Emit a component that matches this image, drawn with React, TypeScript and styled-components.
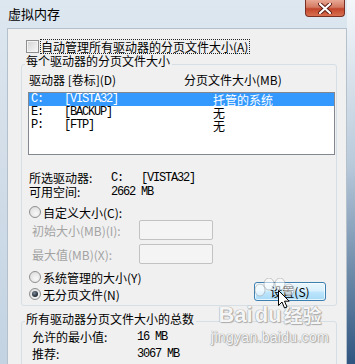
import React from "react";
import styled, { createGlobalStyle } from "styled-components";

const GlobalStyle = createGlobalStyle`
  html, body {
    margin: 0;
    padding: 0;
  }
  body {
    font-family: "Noto Sans CJK SC", "Microsoft YaHei", sans-serif;
    font-size: 12px;
    color: #000;
  }
`;

const Window = styled.div`
  position: relative;
  width: 355px;
  height: 364px;
  overflow: hidden;
  display: flex;
  flex-direction: column;
  background:
    linear-gradient(#f4f7fa 0%, #b9cadb 45%, #2f5580 100%) right top / 8px 100% no-repeat,
    linear-gradient(#dde7f0 0%, #d3dee9 40%, #c3d3e2 100%);
`;

const TitleBar = styled.div`
  height: 28px;
  flex-shrink: 0;
  display: flex;
  align-items: flex-start;
  justify-content: space-between;
`;

const Title = styled.span`
  margin: 7px 0 0 8px;
  font-size: 13px;
  line-height: 14px;
`;

const CloseButton = styled.div`
  width: 40px;
  height: 17px;
  margin-right: 10px;
  box-sizing: border-box;
  border: 1px solid #7a2f24;
  border-top: none;
  border-radius: 0 0 4px 4px;
  background: linear-gradient(#e8a895 0%, #d47a62 45%, #c2462c 55%, #d9704f 100%);
  display: flex;
  align-items: center;
  justify-content: center;
`;

const Client = styled.div`
  flex: 1;
  margin: 0 8px 0 7px;
  border: 1px solid #b4c0cc;
  border-bottom: none;
  background: #f0f0f0;
  display: flex;
  flex-direction: column;
  overflow: hidden;
`;

const CheckRow = styled.div`
  display: flex;
  align-items: center;
  gap: 1px;
  height: 15px;
  margin: 10px 0 0 18px;
`;

const CheckBox = styled.span`
  width: 13px;
  height: 13px;
  box-sizing: border-box;
  border: 1px solid #8f8f8f;
  background: linear-gradient(135deg, #d2d2d2 0%, #e6e6e6 50%, #f8f8f8 100%);
  box-shadow: inset 0 0 0 1px #f4f4f4;
`;

const FocusText = styled.span`
  border: 1px dotted #222;
  padding: 0 1px 0 0;
  line-height: 13px;
`;

const Group = styled.div<{ $top: number; $open?: boolean }>`
  margin: ${(p) => p.$top}px 9px ${(p) => (p.$open ? "-20px" : "0")} 13px;
  border: 1px solid #d5dfe5;
  border-radius: 3px;
  display: flex;
  flex-direction: column;
  padding-bottom: 4px;
  ${(p) => (p.$open ? "flex: 1;" : "")}
`;

const GroupLabel = styled.span<{ $lift: number }>`
  align-self: flex-start;
  margin: ${(p) => -p.$lift}px 0 0 3px;
  padding: 0 2px 0 1px;
  background: #f0f0f0;
  line-height: 13px;
`;

const HeaderRow = styled.div`
  display: flex;
  margin: 6px 0 0 7px;
  line-height: 14px;
`;

const HeaderCell = styled.span<{ $w?: number }>`
  ${(p) => (p.$w ? `width: ${p.$w}px;` : "")}
`;

const ListBox = styled.div`
  margin: 5px 1px 0 6px;
  height: 63px;
  box-sizing: border-box;
  border: 1px solid #828790;
  background: #fff;
  display: flex;
  flex-direction: column;
`;

const ListRow = styled.div<{ $selected?: boolean; $h: number }>`
  height: ${(p) => p.$h}px;
  display: flex;
  align-items: center;
  background: ${(p) => (p.$selected ? "#3399ff" : "transparent")};
  color: ${(p) => (p.$selected ? "#fff" : "#000")};
`;

const Mono = styled.span<{ $w?: number; $pad?: number }>`
  font-family: "Liberation Mono", "DejaVu Sans Mono", monospace;
  font-size: 12px;
  line-height: 11px;
  letter-spacing: -1.2px;
  white-space: pre;
  ${(p) => (p.$w ? `width: ${p.$w}px;` : "")}
  padding-left: ${(p) => p.$pad ?? 0}px;
  box-sizing: border-box;
`;

const StatusCell = styled.span`
  line-height: 11px;
`;

const InfoRow = styled.div<{ $top: number; $left: number }>`
  display: flex;
  align-items: center;
  height: 14px;
  margin: ${(p) => p.$top}px 0 0 ${(p) => p.$left}px;
  line-height: 12px;
`;

const InfoKey = styled.span<{ $w: number }>`
  width: ${(p) => p.$w}px;
`;

const RadioRow = styled.div<{ $top?: number }>`
  display: flex;
  align-items: center;
  gap: 2px;
  height: 14px;
  margin: ${(p) => p.$top ?? 0}px 0 0 7px;
  line-height: 13px;
`;

const Radio = styled.span<{ $checked?: boolean }>`
  width: 12px;
  height: 12px;
  box-sizing: border-box;
  border-radius: 50%;
  border: 1px solid #8e8f8f;
  background: radial-gradient(circle at 60% 65%, #f8f8f8 0%, #d8d8d8 100%);
  display: flex;
  align-items: center;
  justify-content: center;
  &::after {
    content: "";
    display: ${(p) => (p.$checked ? "block" : "none")};
    width: 6px;
    height: 6px;
    border-radius: 50%;
    background: radial-gradient(circle at 40% 35%, #7d8a96 0%, #2a3440 60%, #111 100%);
  }
`;

const FieldRow = styled.div<{ $top: number }>`
  display: flex;
  align-items: center;
  height: 20px;
  margin: ${(p) => p.$top}px 0 0 10px;
`;

const FieldLabel = styled.span`
  width: 107px;
  color: #a3a3a3;
  line-height: 13px;
`;

const FieldInput = styled.span`
  width: 74px;
  height: 20px;
  box-sizing: border-box;
  border: 1px solid #c2c2c2;
  border-radius: 2px;
  background: #f4f4f4;
`;

const BottomRow = styled.div`
  display: flex;
  align-items: flex-end;
  justify-content: space-between;
  margin: -2px 10px 0 0;
`;

const SetButton = styled.div`
  width: 72px;
  height: 19px;
  box-sizing: border-box;
  border: 1px solid #3c7fb1;
  border-radius: 3px;
  background: linear-gradient(#eaf6fd 0%, #d9f0fc 48%, #bee6fd 52%, #a7d9f5 100%);
  box-shadow: inset 0 0 0 1px rgba(255, 255, 255, 0.7);
  display: flex;
  align-items: center;
  justify-content: center;
  line-height: 14px;
`;

const Watermark = styled.div`
  position: absolute;
  left: 211px;
  top: 304px;
  width: 118px;
  display: flex;
  flex-direction: column;
  align-items: center;
  pointer-events: none;
  color: rgba(255, 255, 255, 0.92);
  text-shadow: 0 0 1px #9a9a9a, 0 0 1px #9a9a9a, 1px 1px 1px #b0b0b0;
`;

const MarkTop = styled.div`
  display: flex;
  align-items: center;
  gap: 2px;
  font-family: "Liberation Sans", Arial, sans-serif;
  font-weight: bold;
  font-size: 22px;
  line-height: 22px;
`;

const MarkCjk = styled.span`
  font-family: "Noto Sans CJK SC", sans-serif;
  font-size: 19px;
  font-weight: bold;
`;

const MarkUrl = styled.div`
  font-family: "Liberation Sans", Arial, sans-serif;
  font-size: 14px;
  line-height: 16px;
  letter-spacing: 0.3px;
  margin-top: 3px;
`;

const Paw = styled.svg`
  position: absolute;
  left: 252px;
  top: 278px;
  pointer-events: none;
`;

const Cursor = styled.svg`
  position: absolute;
  left: 278px;
  top: 290px;
  pointer-events: none;
`;

const App: React.FC = () => {
  return (
    <>
      <GlobalStyle />
      <Window>
        <TitleBar>
          <Title>虚拟内存</Title>
          <CloseButton>
            <svg width="14" height="11" viewBox="0 0 14 11">
              <path
                d="M2 1 L12 10 M12 1 L2 10"
                stroke="#5a1c12"
                strokeWidth="4"
                strokeLinecap="round"
              />
              <path
                d="M2 1 L12 10 M12 1 L2 10"
                stroke="#fff"
                strokeWidth="2.2"
                strokeLinecap="round"
              />
            </svg>
          </CloseButton>
        </TitleBar>
        <Client>
          <CheckRow>
            <CheckBox />
            <FocusText>自动管理所有驱动器的分页文件大小(A)</FocusText>
          </CheckRow>

          <Group $top={10}>
            <GroupLabel $lift={11}>每个驱动器的分页文件大小</GroupLabel>
            <HeaderRow>
              <HeaderCell $w={155}>驱动器 [卷标](D)</HeaderCell>
              <HeaderCell>分页文件大小(MB)</HeaderCell>
            </HeaderRow>
            <ListBox>
              <ListRow $selected $h={13}>
                <Mono $w={35} $pad={2}>C:</Mono>
                <Mono $w={149}>[VISTA32]</Mono>
                <StatusCell>托管的系统</StatusCell>
              </ListRow>
              <ListRow $h={13}>
                <Mono $w={35} $pad={2}>E:</Mono>
                <Mono $w={149}>[BACKUP]</Mono>
                <StatusCell>无</StatusCell>
              </ListRow>
              <ListRow $h={12}>
                <Mono $w={35} $pad={2}>P:</Mono>
                <Mono $w={149}>[FTP]</Mono>
                <StatusCell>无</StatusCell>
              </ListRow>
            </ListBox>

            <InfoRow $top={16} $left={7}>
              <InfoKey $w={82}>所选驱动器:</InfoKey>
              <Mono>{"C:   [VISTA32]"}</Mono>
            </InfoRow>
            <InfoRow $top={0} $left={7}>
              <InfoKey $w={82}>可用空间:</InfoKey>
              <Mono>2662 MB</Mono>
            </InfoRow>

            <RadioRow $top={6}>
              <Radio />
              <span>自定义大小(C):</span>
            </RadioRow>
            <FieldRow $top={1}>
              <FieldLabel>初始大小(MB)(I):</FieldLabel>
              <FieldInput />
            </FieldRow>
            <FieldRow $top={4}>
              <FieldLabel>最大值(MB)(X):</FieldLabel>
              <FieldInput />
            </FieldRow>

            <RadioRow $top={6}>
              <Radio />
              <span>系统管理的大小(Y)</span>
            </RadioRow>
            <BottomRow>
              <RadioRow>
                <Radio $checked />
                <span>无分页文件(N)</span>
              </RadioRow>
              <SetButton>设置(S)</SetButton>
            </BottomRow>
          </Group>

          <Group $top={15} $open>
            <GroupLabel $lift={10}>所有驱动器分页文件大小的总数</GroupLabel>
            <InfoRow $top={5} $left={10}>
              <InfoKey $w={105}>允许的最小值:</InfoKey>
              <Mono>16 MB</Mono>
            </InfoRow>
            <InfoRow $top={3} $left={10}>
              <InfoKey $w={105}>推荐:</InfoKey>
              <Mono>3067 MB</Mono>
            </InfoRow>
          </Group>
        </Client>

        <Paw width="44" height="30" viewBox="0 0 44 30">
          <g fill="rgba(255,255,255,0.55)" stroke="rgba(150,150,150,0.5)" strokeWidth="1">
            <ellipse cx="8" cy="12" rx="5" ry="6" />
            <ellipse cx="17" cy="6" rx="5" ry="6" />
            <ellipse cx="28" cy="6" rx="5" ry="6" />
            <ellipse cx="37" cy="12" rx="5" ry="6" />
          </g>
        </Paw>

        <Watermark>
          <MarkTop>
            <span>Bai</span>
            <span>du</span>
            <MarkCjk>经验</MarkCjk>
          </MarkTop>
          <MarkUrl>jingyan.baidu.com</MarkUrl>
        </Watermark>

        <Cursor width="12" height="19" viewBox="0 0 12 19">
          <path
            d="M0.5 0.5 L0.5 15.5 L4 12 L6.5 18 L9 17 L6.5 11.2 L11.2 11.2 Z"
            fill="#fff"
            stroke="#000"
            strokeWidth="1"
          />
        </Cursor>
      </Window>
    </>
  );
};

export default App;
